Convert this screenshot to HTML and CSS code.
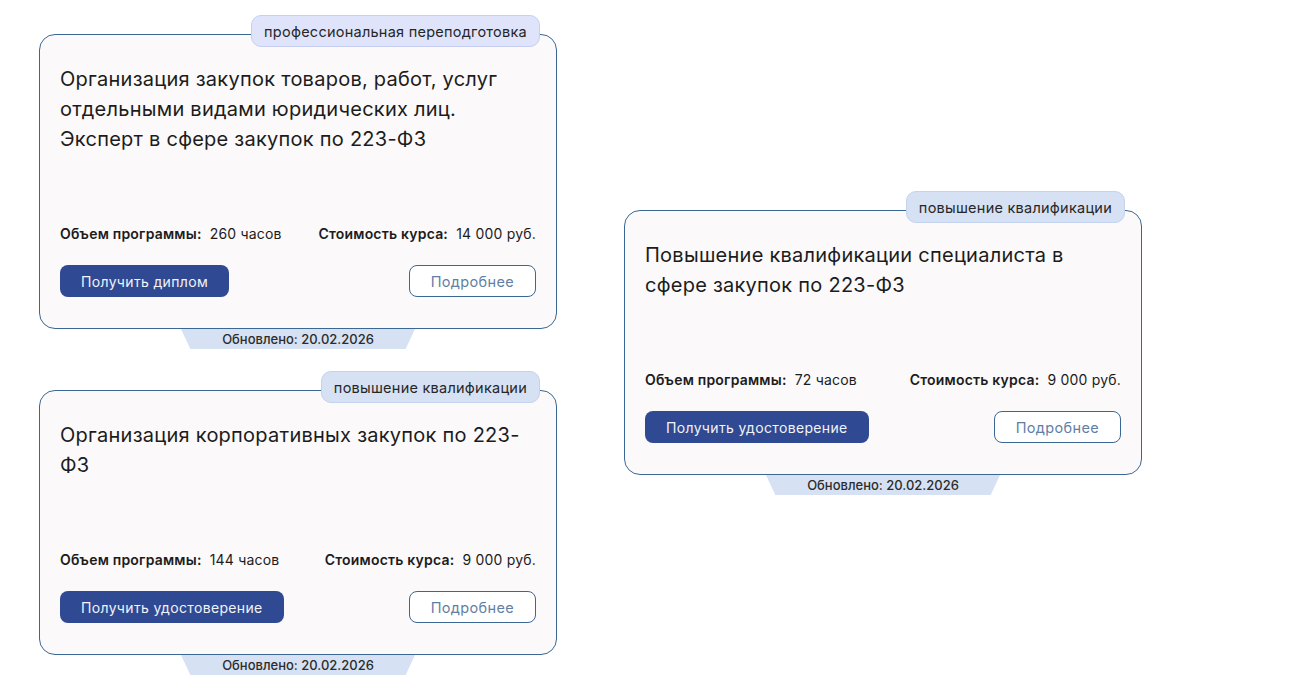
FILE: index.html
```html
<!DOCTYPE html>
<html lang="ru">
<head>
  <meta charset="UTF-8">
  <title>Программы обучения</title>
  <link rel="stylesheet" href="styles.css">
</head>
<body>
  <div class="courses">
    <div class="column">
      <div class="course">
        <span class="course-tag tag-retrain">профессиональная переподготовка</span>
        <div class="course-card">
          <h3 class="course-title">Организация закупок товаров, работ, услуг отдельными видами юридических лиц. Эксперт в сфере закупок по 223-ФЗ</h3>
          <div class="course-info">
            <div><b>Объем программы:</b> <span>260 часов</span></div>
            <div><b>Стоимость курса:</b> <span>14 000 руб.</span></div>
          </div>
          <div class="course-actions">
            <a class="btn btn-main" href="#">Получить диплом</a>
            <a class="btn btn-more" href="#">Подробнее</a>
          </div>
        </div>
        <div class="course-updated">Обновлено: 20.02.2026</div>
      </div>

      <div class="course">
        <span class="course-tag">повышение квалификации</span>
        <div class="course-card">
          <h3 class="course-title">Организация корпоративных закупок по 223-ФЗ</h3>
          <div class="course-info">
            <div><b>Объем программы:</b> <span>144 часов</span></div>
            <div><b>Стоимость курса:</b> <span>9 000 руб.</span></div>
          </div>
          <div class="course-actions">
            <a class="btn btn-main" href="#">Получить удостоверение</a>
            <a class="btn btn-more" href="#">Подробнее</a>
          </div>
        </div>
        <div class="course-updated">Обновлено: 20.02.2026</div>
      </div>
    </div>

    <div class="column column-side">
      <div class="course">
        <span class="course-tag">повышение квалификации</span>
        <div class="course-card">
          <h3 class="course-title">Повышение квалификации специалиста в сфере закупок по 223-ФЗ</h3>
          <div class="course-info">
            <div><b>Объем программы:</b> <span>72 часов</span></div>
            <div><b>Стоимость курса:</b> <span>9 000 руб.</span></div>
          </div>
          <div class="course-actions">
            <a class="btn btn-main" href="#">Получить удостоверение</a>
            <a class="btn btn-more" href="#">Подробнее</a>
          </div>
        </div>
        <div class="course-updated">Обновлено: 20.02.2026</div>
      </div>
    </div>
  </div>
</body>
</html>
```

FILE: styles.css
```css
body {
  margin: 0;
  background: #fff;
  font-family: Inter, "Noto Sans", sans-serif;
  color: #1f1f1f;
}
.courses {
  display: flex;
  align-items: center;
  gap: 67px;
  padding: 15px 0 0 39px;
}
.column {
  display: flex;
  flex-direction: column;
  gap: 22px;
}
.column-side {
  margin-bottom: 4px;
}
.course {
  position: relative;
  width: 518px;
  padding-top: 19px;
}
/* плашка с типом программы поверх рамки */
.course-tag {
  position: absolute;
  top: 0;
  right: 17px;
  height: 32px;
  box-sizing: border-box;
  padding: 0 12px;
  display: flex;
  align-items: center;
  font-size: 14.5px;
  letter-spacing: 0.25px;
  color: #262626;
  background: #d7e1f4;
  border: 1px solid #c3d2ee;
  border-radius: 10px;
}
.course-tag.tag-retrain {
  background: #dfe4fb;
  border-color: #c6cff2;
}
.course-card {
  background: #fbf9fa;
  border: 1px solid #3b6794;
  border-radius: 16px;
  padding: 29px 20px 31px;
}
.course-title {
  margin: 0 0 70px;
  font-size: 20px;
  line-height: 30px;
  font-weight: 400;
  letter-spacing: 0.25px;
  color: #1c1c1c;
}
.course-info {
  display: flex;
  justify-content: space-between;
  font-size: 14px;
  line-height: 20px;
  letter-spacing: 0.2px;
  color: #1c1c1c;
}
.course-info b {
  font-weight: 600;
  margin-right: 4px;
}
.course-actions {
  display: flex;
  justify-content: space-between;
  margin-top: 21px;
}
.btn {
  height: 32px;
  box-sizing: border-box;
  display: flex;
  align-items: center;
  justify-content: center;
  padding: 0 21px;
  border-radius: 8px;
  font-size: 14px;
  letter-spacing: 0.35px;
  text-decoration: none;
}
.btn-main {
  background: #2f4993;
  color: #f2f3f8;
}
.btn-more {
  min-width: 126px;
  border: 1px solid #3b6794;
  color: #5f7fa6;
  background: #fff;
  font-size: 14.5px;
}
.course-updated {
  width: 234px;
  height: 20px;
  margin: 0 auto;
  background: #d6e1f3;
  clip-path: polygon(0 0, 100% 0, 96% 100%, 4% 100%);
  text-align: center;
  font-size: 13px;
  line-height: 21px;
  font-weight: 500;
  color: #2c2c2c;
}
```
